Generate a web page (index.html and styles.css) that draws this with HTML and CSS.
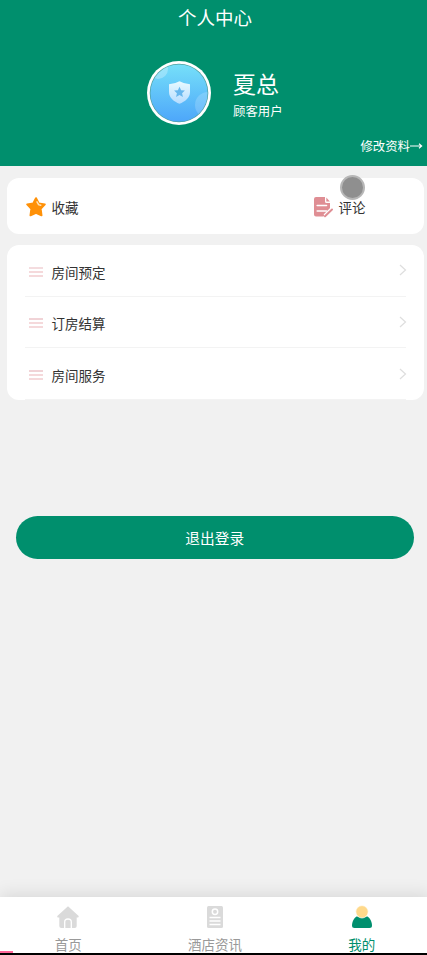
FILE: index.html
```html
<!DOCTYPE html>
<html lang="zh-CN">
<head>
<meta charset="utf-8">
<title>个人中心</title>
<link rel="stylesheet" href="styles.css">
</head>
<body>
<div class="app">
  <header class="header">
    <h1 class="title">个人中心</h1>
    <div class="profile">
      <svg class="avatar" viewBox="0 0 64 64">
        <defs>
          <linearGradient id="sky" x1="0" y1="0" x2="0" y2="1"><stop offset="0" stop-color="#78e3f9"/><stop offset="1" stop-color="#4ba3fa"/></linearGradient>
          <linearGradient id="shield" x1="0" y1="0" x2="0" y2="1"><stop offset="0" stop-color="#e9faff"/><stop offset="1" stop-color="#b5dcff"/></linearGradient>
          <clipPath id="disc"><circle cx="32" cy="32" r="28.6"/></clipPath>
        </defs>
        <circle cx="32" cy="32" r="32" fill="#fff"/>
        <circle cx="32" cy="32" r="29.3" fill="#4c9f9e"/>
        <g clip-path="url(#disc)">
          <rect width="64" height="64" fill="url(#sky)"/>
          <circle cx="11" cy="8" r="10" fill="#fff" opacity=".28"/>
          <circle cx="61" cy="44" r="13" fill="#fff" opacity=".18"/>
        </g>
        <path d="M32.5 20.2 Q37 22.8 43 23.2 V31 C43 37 38 40.5 32.5 42.8 C27 40.5 22 37 22 31 V23.2 Q28 22.8 32.5 20.2Z" fill="url(#shield)"/>
        <path d="M32.5 25.7l1.6 3.5 3.8.4-2.8 2.6.8 3.8-3.4-1.9-3.4 1.9.8-3.8-2.8-2.6 3.8-.4z" fill="#66b7ee"/>
      </svg>
      <div class="who">
        <div class="name">夏总</div>
        <div class="role">顾客用户</div>
      </div>
    </div>
    <a class="edit">修改资料<svg class="arrow" viewBox="0 0 13 8"><path d="M0 4H11.5M9 1.8L11.7 4L9 6.2" fill="none" stroke="#fff" stroke-width="1.1"/></svg></a>
  </header>

  <main class="main">
    <section class="card shortcuts">
      <a class="shortcut favorite">
        <svg class="shortcut-icon" viewBox="0 0 22 22"><path d="M11 2.2l2.7 5.2 6.1 1-4.2 4.3.9 6.6-5.5-2.4-5.5 2.4.9-6.6L2.2 8.4l6.1-1z" fill="#ff9108" stroke="#ff9108" stroke-width="2" stroke-linejoin="round"/><path d="M12 5.8l1.6 2.8 2.1.6" fill="none" stroke="#ffe3b8" stroke-width="1.5" stroke-linecap="round"/></svg>
        <span>收藏</span>
      </a>
      <a class="shortcut comment">
        <svg class="shortcut-icon" viewBox="0 0 22 22"><path d="M4 1H13V5.5Q13 7 14.5 7H18V13L11.5 20.5H4Q2 20.5 2 18.5V3Q2 1 4 1Z" fill="#df8e94"/><path d="M14.3 1.5L17.8 5.5H14.3Z" fill="#df8e94"/><path d="M5.2 9.5H14.5M5.2 15H14.5" stroke="#fff" stroke-width="1.6" stroke-linecap="round"/><path d="M13 20L19.5 13.5" stroke="#fff" stroke-width="4"/><path d="M13 20.3L20 13.5" stroke="#df8e94" stroke-width="2" stroke-linecap="round"/></svg>
        <span>评论</span>
        <i class="touch"></i>
      </a>
    </section>

    <nav class="card menu">
      <a class="row"><svg class="lines" viewBox="0 0 14 10"><path d="M0 1H14" stroke="#e9b9be"/><path d="M0 5H14M0 9H14" stroke="#f2cdd0" stroke-width="1.4"/></svg><span>房间预定</span><svg class="chevron" viewBox="0 0 8 12"><path d="M1 1L6.5 6L1 11" fill="none" stroke="#dedede" stroke-width="1.2"/></svg></a>
      <a class="row"><svg class="lines" viewBox="0 0 14 10"><path d="M0 1H14" stroke="#e2a7ae"/><path d="M0 5H14M0 9H14" stroke="#f2cdd0" stroke-width="1.4"/></svg><span>订房结算</span><svg class="chevron" viewBox="0 0 8 12"><path d="M1 1L6.5 6L1 11" fill="none" stroke="#dedede" stroke-width="1.2"/></svg></a>
      <a class="row"><svg class="lines" viewBox="0 0 14 10"><path d="M0 1H14" stroke="#e2a7ae"/><path d="M0 5H14M0 9H14" stroke="#f2cdd0" stroke-width="1.4"/></svg><span>房间服务</span><svg class="chevron" viewBox="0 0 8 12"><path d="M1 1L6.5 6L1 11" fill="none" stroke="#dedede" stroke-width="1.2"/></svg></a>
    </nav>

    <button class="logout">退出登录</button>
  </main>

  <nav class="tabs">
    <a class="tab">
      <svg class="tab-icon" viewBox="0 0 24 24"><path d="M12 1.2L22.7 11Q23 12.5 21.5 12.5H20.7V21Q20.7 23 18.7 23H5.3Q3.3 23 3.3 21V12.5H2.2Q.8 12.5 1.3 11Z" fill="#dadada"/><path d="M8.7 23V17Q8.7 14 12 14T15.3 17V23" fill="#dadada" stroke="#fff" stroke-width="1.3"/></svg>
      <span>首页</span>
    </a>
    <a class="tab">
      <svg class="tab-icon" viewBox="0 0 24 24"><rect x="4" y="1" width="16" height="22" rx="1.5" fill="#dadada"/><circle cx="12" cy="6.7" r="2.7" fill="none" stroke="#fff" stroke-width="1.5"/><path d="M6.5 12.5H17.5M6.5 16H17.5M6.5 19.5H17.5" stroke="#fff" stroke-width="1.5"/></svg>
      <span>酒店资讯</span>
    </a>
    <a class="tab active">
      <svg class="tab-icon" viewBox="0 0 24 24"><path d="M6.5 11.5H17.5C20 13 22 17 22 20.5Q22 23 19.5 23H4.5Q2 23 2 20.5C2 17 4 13 6.5 11.5Z" fill="#008f6e"/><circle cx="12" cy="6.8" r="6.2" fill="#ffd98b" stroke="#fff" stroke-width=".7"/></svg>
      <span>我的</span>
    </a>
  </nav>
  <div class="progress"></div>
</div>
</body>
</html>
```
FILE: styles.css
```css
* { box-sizing: border-box; }
body { margin: 0; font-family: "Noto Sans CJK SC", sans-serif; color: #333; background: #f1f1f1; }
svg { display: block; flex: none; }
.app { position: relative; display: flex; flex-direction: column; width: 427px; height: 955px; overflow: hidden; }

.header { height: 166px; background: #008f6d; color: #fff; display: flex; flex-direction: column; }
.title { margin: 0 -3px 0 0; height: 34px; line-height: 34px; font-size: 18.5px; font-weight: 400; text-align: center; }
.profile { display: flex; align-items: center; gap: 22px; height: 64px; margin: 27px 0 0 147px; }
.avatar { width: 64px; height: 64px; }
.name { height: 34px; line-height: 34px; font-size: 23px; }
.role { height: 22px; line-height: 22px; font-size: 12.4px; }
.who { padding-top: 2px; }
.edit { display: flex; align-items: center; align-self: flex-end; height: 20px; margin: 11px 4px 0 0; font-size: 12.4px; line-height: 20px; }
.arrow { width: 13px; height: 8px; }

.main { flex: 1; display: flex; flex-direction: column; padding: 12px 3.5px 0 6.5px; }
.card { background: #fff; border-radius: 12px; }
.shortcuts { display: flex; justify-content: space-between; height: 55.5px; padding: 2px 58px 0 18px; }
.shortcut { position: relative; display: flex; align-items: center; gap: 5px; font-size: 13.5px; }
.shortcut-icon { width: 22px; height: 22px; }
.touch { position: absolute; left: 28px; top: -5px; width: 25px; height: 25px; border-radius: 50%; background: #8f8f8f; border: 2px solid #b7b7b7; }

.menu { height: 155px; margin-top: 11.5px; padding: 0 18px; }
.row { display: flex; align-items: center; height: 51.67px; padding: 3px 0 0 4px; border-bottom: 1px solid #f3f3f3; font-size: 13.5px; }
.lines { width: 14px; height: 10px; margin-right: 9px; }
.chevron { width: 8px; height: 12px; margin: -3px -1px 0 auto; }

.logout { margin: 115.5px 9.5px 0 9px; height: 43.5px; padding: 0; border: 0; border-radius: 22px; background: #008f6d; color: #fff; font: 14.7px/43px "Noto Sans CJK SC", sans-serif; }

.tabs { display: flex; height: 56px; margin-right: -3px; background: #fff; box-shadow: 0 -3px 16px rgba(0, 0, 0, .1); }
.tab { flex: 1; display: flex; flex-direction: column; align-items: center; padding-top: 8px; font-size: 13.5px; line-height: 20px; color: #999; }
.tab:first-child { padding-right: 10px; }
.tab:last-child { padding-left: 10px; }
.tab-icon { width: 24px; height: 24px; margin-bottom: 5px; }
.active { color: #008f6d; }
.progress { position: relative; height: 2px; background: #000; }
.progress::before { content: ""; position: absolute; left: 0; bottom: 2px; width: 13px; height: 2px; background: #ff6699; }
```
